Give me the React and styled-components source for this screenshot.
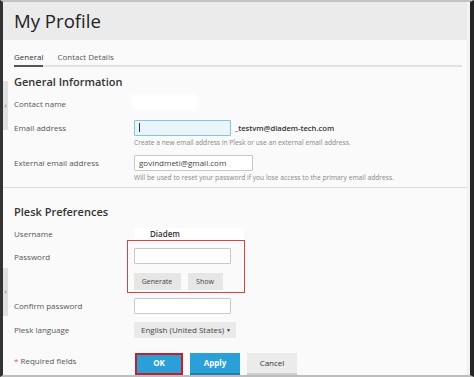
import React from 'react'
import styled, { createGlobalStyle } from 'styled-components'

const GlobalStyle = createGlobalStyle`
  html, body { margin: 0; padding: 0; background: #fafafa; }
  body { font-family: "Open Sans", "Liberation Sans", sans-serif; }
  * { box-sizing: border-box; }
`

const Frame = styled.div`
  position: relative;
  width: 474px;
  height: 377px;
  overflow: hidden;
  border-left: 3px solid #333;
  border-right: 4px solid #262626;
  border-top: 2px solid #c2c2c2;
  border-bottom: 2px solid #bdbdbd;
  background: #f3f3f3;
`

const Page = styled.div`
  margin-right: 3px;
  height: 100%;
  background: #fafafa;
  display: flex;
  flex-direction: column;
`

const Header = styled.div`
  height: 38px;
  background: #ebebeb;
  display: flex;
  align-items: center;
  padding-left: 11px;
`

const Title = styled.h1`
  margin: 0;
  font-size: 18.6px;
  font-weight: 400;
  color: #222;
`

const Tabs = styled.div`
  display: flex;
  gap: 14px;
  margin: 0 5px 0 11px;
  padding-top: 11px;
  border-bottom: 2px solid #e2e2e2;
`

const Tab = styled.div`
  font-size: 8px;
  line-height: 12px;
  color: ${p => (p.$active ? '#333' : '#555')};
  padding-bottom: 2px;
  margin-bottom: -2px;
  border-bottom: 2px solid ${p => (p.$active ? '#555' : 'transparent')};
`

const Section = styled.div`
  padding-left: 11px;
`

const Heading = styled.h2`
  margin: ${p => p.$top}px 0 0;
  font-size: 11px;
  line-height: 14px;
  font-weight: 600;
  color: #333;
`

const Row = styled.div`
  display: flex;
  align-items: flex-start;
  margin-top: ${p => p.$top || 0}px;
`

const Label = styled.div`
  width: ${p => p.$w || 120}px;
  flex-shrink: 0;
  font-size: 8px;
  line-height: ${p => p.$lh || 16}px;
  padding-top: ${p => p.$pt || 0}px;
  color: #555;
`

const Input = styled.div`
  width: ${p => p.$w || 97}px;
  height: 16px;
  border: 1px solid ${p => (p.$focus ? '#86c3e0' : '#c9c9c9')};
  background: ${p => (p.$focus ? '#eaf5fb' : '#fff')};
  font-size: 8px;
  line-height: 14px;
  padding-left: 4px;
  color: #444;
  border-radius: 1px;
`

const Caret = styled.span`
  display: inline-block;
  width: 1px;
  height: 9px;
  margin-top: 2.5px;
  background: #333;
`

const Suffix = styled.span`
  font-size: 7.6px;
  line-height: 16px;
  font-weight: 600;
  color: #333;
  margin-left: 4px;
`

const Hint = styled.div`
  margin: 2px 0 0 120px;
  font-size: 6.7px;
  line-height: 9px;
  color: #888;
`

const Divider = styled.div`
  height: 1px;
  background: #dcdcdc;
  margin-top: 5px;
`

const Redacted = styled.span`
  display: inline-block;
  width: ${p => p.$w}px;
  height: 12px;
  background: #fff;
  box-shadow: 0 0 4px 2px #fff;
  border-radius: 3px;
`

const Value = styled.div`
  font-size: 8px;
  line-height: 12px;
  font-weight: 600;
  color: #333;
  background: #fff;
  padding-left: 16px;
  width: 110px;
`

const Highlight = styled.div`
  width: 118px;
  border: 1.5px solid #d64545;
  padding: 7.5px 0 2px 5.5px;
`

const SmallButtons = styled.div`
  display: flex;
  gap: 7px;
  margin-top: 9px;
`

const GrayButton = styled.div`
  width: ${p => p.$w}px;
  height: 17px;
  background: #e6e6e6;
  font-size: 7px;
  line-height: 17px;
  text-align: center;
  color: #444;
`

const Select = styled.div`
  width: 102px;
  height: 16px;
  background: #eaeaea;
  font-size: 8px;
  line-height: 16px;
  color: #444;
  padding: 0 5px 0 7px;
  display: flex;
  justify-content: space-between;
`

const Arrow = styled.span`
  font-size: 5px;
  color: #333;
`

const Required = styled.span`
  color: #d9534f;
`

const Actions = styled.div`
  display: flex;
  gap: 7px;
  margin-left: 1px;
`

const ActionButton = styled.div`
  width: ${p => p.$w || 50}px;
  height: 22px;
  font-size: 8px;
  font-weight: ${p => (p.$primary ? 700 : 400)};
  line-height: 20px;
  text-align: center;
  color: ${p => (p.$primary ? '#fff' : '#333')};
  background: ${p => (p.$primary ? '#2ba0d8' : '#ebebeb')};
  border-bottom: 2px solid ${p => (p.$primary ? '#1d7fae' : '#cfcfcf')};
  outline: ${p => (p.$marked ? '2px solid #c81e2a' : 'none')};
  outline-offset: -2px;
`

const Handle = styled.div`
  position: absolute;
  left: 0;
  top: ${p => p.$top}px;
  width: 5px;
  height: ${p => p.$h}px;
  background: #e1e1e1;
  font-size: 7px;
  line-height: ${p => p.$h}px;
  color: #555;
  text-align: center;
`

export default function App() {
  return (
    <>
      <GlobalStyle />
      <Frame>
        <Page>
          <Header>
            <Title>My Profile</Title>
          </Header>
          <Tabs>
            <Tab $active>General</Tab>
            <Tab>Contact Details</Tab>
          </Tabs>
          <Section>
            <Heading $top={8}>General Information</Heading>
            <Row $top={7}>
              <Label>Contact name</Label>
              <Redacted $w={62} />
            </Row>
            <Row $top={8}>
              <Label>Email address</Label>
              <Input $focus><Caret /></Input>
              <Suffix>_testvm@diadem-tech.com</Suffix>
            </Row>
            <Hint>Create a new email address in Plesk or use an external email address.</Hint>
            <Row $top={8}>
              <Label>External email address</Label>
              <Input $w={119}>govindmeti@gmail.com</Input>
            </Row>
            <Hint>Will be used to reset your password if you lose access to the primary email address.</Hint>
          </Section>
          <Divider />
          <Section>
            <Heading $top={17}>Plesk Preferences</Heading>
            <Row $top={9}>
              <Label $lh={12}>Username</Label>
              <Value>Diadem</Value>
            </Row>
            <Row>
              <Label $w={113} $pt={9}>Password</Label>
              <Highlight>
                <Input />
                <SmallButtons>
                  <GrayButton $w={47}>Generate</GrayButton>
                  <GrayButton $w={35}>Show</GrayButton>
                </SmallButtons>
              </Highlight>
            </Row>
            <Row $top={5}>
              <Label>Confirm password</Label>
              <Input />
            </Row>
            <Row $top={8}>
              <Label>Plesk language</Label>
              <Select>
                English (United States)
                <Arrow>▼</Arrow>
              </Select>
            </Row>
            <Row $top={15}>
              <Label>
                <Required>*</Required> Required fields
              </Label>
              <Actions>
                <ActionButton $primary $marked $w={48}>OK</ActionButton>
                <ActionButton $primary>Apply</ActionButton>
                <ActionButton>Cancel</ActionButton>
              </Actions>
            </Row>
          </Section>
        </Page>
        <Handle $top={79} $h={49}>‹</Handle>
        <Handle $top={266} $h={48}>‹</Handle>
      </Frame>
    </>
  )
}
